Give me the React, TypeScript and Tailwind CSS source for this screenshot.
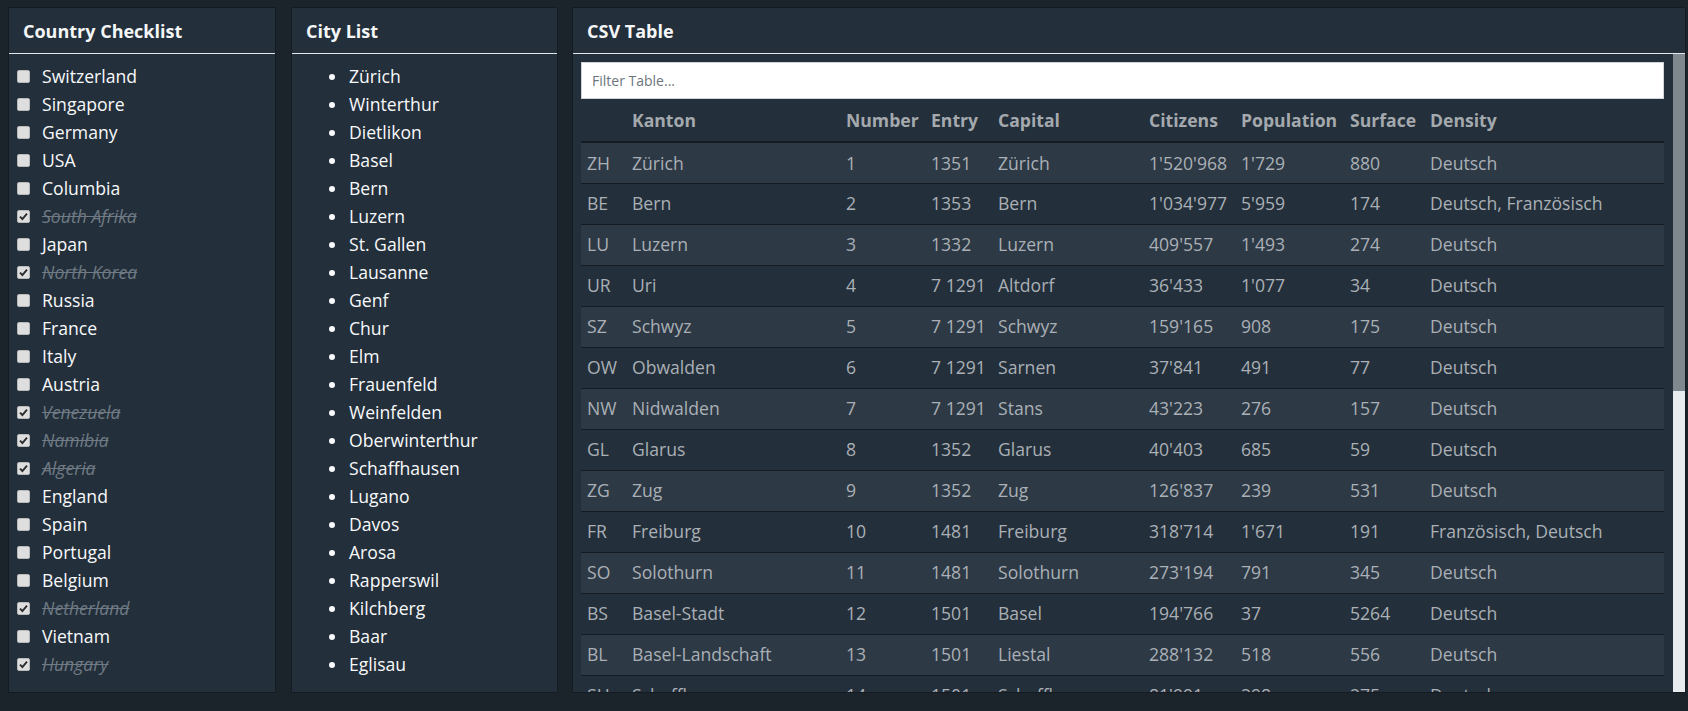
import React from 'react';

const countries: { name: string; done: boolean }[] = [
  { name: 'Switzerland', done: false },
  { name: 'Singapore', done: false },
  { name: 'Germany', done: false },
  { name: 'USA', done: false },
  { name: 'Columbia', done: false },
  { name: 'South Afrika', done: true },
  { name: 'Japan', done: false },
  { name: 'North Korea', done: true },
  { name: 'Russia', done: false },
  { name: 'France', done: false },
  { name: 'Italy', done: false },
  { name: 'Austria', done: false },
  { name: 'Venezuela', done: true },
  { name: 'Namibia', done: true },
  { name: 'Algeria', done: true },
  { name: 'England', done: false },
  { name: 'Spain', done: false },
  { name: 'Portugal', done: false },
  { name: 'Belgium', done: false },
  { name: 'Netherland', done: true },
  { name: 'Vietnam', done: false },
  { name: 'Hungary', done: true },
];

const cities = [
  'Zürich', 'Winterthur', 'Dietlikon', 'Basel', 'Bern', 'Luzern', 'St. Gallen', 'Lausanne', 'Genf', 'Chur', 'Elm',
  'Frauenfeld', 'Weinfelden', 'Oberwinterthur', 'Schaffhausen', 'Lugano', 'Davos', 'Arosa', 'Rapperswil', 'Kilchberg',
  'Baar', 'Eglisau',
];

const headers = ['', 'Kanton', 'Number', 'Entry', 'Capital', 'Citizens', 'Population', 'Surface', 'Density'];
const widths = ['w-[45px]', 'w-[214px]', 'w-[85px]', 'w-[67px]', 'w-[151px]', 'w-[92px]', 'w-[109px]', 'w-[80px]', 'w-[240px]'];

const rows: string[][] = [
  ['ZH', 'Zürich', '1', '1351', 'Zürich', "1'520'968", "1'729", '880', 'Deutsch'],
  ['BE', 'Bern', '2', '1353', 'Bern', "1'034'977", "5'959", '174', 'Deutsch, Französisch'],
  ['LU', 'Luzern', '3', '1332', 'Luzern', "409'557", "1'493", '274', 'Deutsch'],
  ['UR', 'Uri', '4', '7 1291', 'Altdorf', "36'433", "1'077", '34', 'Deutsch'],
  ['SZ', 'Schwyz', '5', '7 1291', 'Schwyz', "159'165", '908', '175', 'Deutsch'],
  ['OW', 'Obwalden', '6', '7 1291', 'Sarnen', "37'841", '491', '77', 'Deutsch'],
  ['NW', 'Nidwalden', '7', '7 1291', 'Stans', "43'223", '276', '157', 'Deutsch'],
  ['GL', 'Glarus', '8', '1352', 'Glarus', "40'403", '685', '59', 'Deutsch'],
  ['ZG', 'Zug', '9', '1352', 'Zug', "126'837", '239', '531', 'Deutsch'],
  ['FR', 'Freiburg', '10', '1481', 'Freiburg', "318'714", "1'671", '191', 'Französisch, Deutsch'],
  ['SO', 'Solothurn', '11', '1481', 'Solothurn', "273'194", '791', '345', 'Deutsch'],
  ['BS', 'Basel-Stadt', '12', '1501', 'Basel', "194'766", '37', '5264', 'Deutsch'],
  ['BL', 'Basel-Landschaft', '13', '1501', 'Liestal', "288'132", '518', '556', 'Deutsch'],
  ['SH', 'Schaffhausen', '14', '1501', 'Schaffhausen', "81'991", '298', '275', 'Deutsch'],
];

function Box({ checked }: { checked: boolean }) {
  return (
    <span className="w-[13px] h-[13px] shrink-0 rounded-[2px] border border-[#b9b9b9] bg-[#dedede] flex items-center justify-center">
      {checked && (
        <svg width="9" height="9" viewBox="0 0 9 9">
          <path d="M1 4.6 L3.4 7 L8 1.6" fill="none" stroke="#2b2b2b" strokeWidth="1.9" />
        </svg>
      )}
    </span>
  );
}

function Panel({ title, className, children }: { title: string; className: string; children: React.ReactNode }) {
  return (
    <div className={`bg-[#232f3a] border border-[#151b21] flex flex-col h-[686px] ${className}`}>
      <div className="h-[46px] shrink-0 flex items-center pl-[14px] pt-[2px] border-b border-[#e3e6ea] text-[18px] font-bold text-[#f4f6f8]">
        {title}
      </div>
      {children}
    </div>
  );
}

export default function App() {
  return (
    <div
      className="w-[1688px] h-[711px] bg-[#1b232b] overflow-hidden pt-[7px] pl-[8px] flex gap-[15px]"
      style={{ fontFamily: '"Open Sans", "Noto Sans", sans-serif' }}
    >
      <Panel title="Country Checklist" className="w-[268px]">
        <ul className="pt-[8px] pl-[8px]">
          {countries.map(c => (
            <li key={c.name} className="h-[28px] flex items-center gap-[12px] text-[17.6px]">
              <Box checked={c.done} />
              <span className={c.done ? 'italic line-through text-[#6f7a84]' : 'text-[#f8f9fa]'}>{c.name}</span>
            </li>
          ))}
        </ul>
      </Panel>

      <Panel title="City List" className="w-[267px]">
        <ul className="pt-[8px] pl-[37px]">
          {cities.map(c => (
            <li key={c} className="h-[28px] flex items-center gap-[14px] text-[17.6px] text-[#f8f9fa]">
              <span className="w-[6px] h-[6px] rounded-full bg-[#f8f9fa] mt-[2px]" />
              {c}
            </li>
          ))}
        </ul>
      </Panel>

      <Panel title="CSV Table" className="w-[1114px] -ml-[1px]">
        <div className="flex flex-1 min-h-0">
          <div className="flex-1 overflow-hidden pt-[8px] pl-[8px] pr-[9px]">
            <div className="h-[37px] bg-white border border-[#ced4da] flex items-center pl-[10px] text-[14px] text-[#6c757d]">
              Filter Table...
            </div>
            <table className="table-fixed w-[1083px] border-collapse text-[17.6px]">
              <thead>
                <tr className="h-[43px] border-b-2 border-[#151b21]">
                  {headers.map((h, i) => (
                    <th key={i} className={`${widths[i]} px-[6px] text-left font-bold text-[#a4a9ae] whitespace-nowrap`}>
                      {h}
                    </th>
                  ))}
                </tr>
              </thead>
              <tbody>
                {rows.map((r, ri) => (
                  <tr key={r[0]} className={`h-[41px] border-b border-[#151b21] ${ri % 2 === 0 ? 'bg-[#2d3945]' : ''}`}>
                    {r.map((v, i) => (
                      <td key={i} className="px-[6px] text-[#aab0b6] whitespace-nowrap">
                        {v}
                      </td>
                    ))}
                  </tr>
                ))}
              </tbody>
            </table>
          </div>
          <div className="w-[12px] shrink-0 flex flex-col">
            <div className="h-[337px] bg-[#7f878f]" />
            <div className="flex-1 bg-[#e9ecef]" />
          </div>
        </div>
      </Panel>
    </div>
  );
}
